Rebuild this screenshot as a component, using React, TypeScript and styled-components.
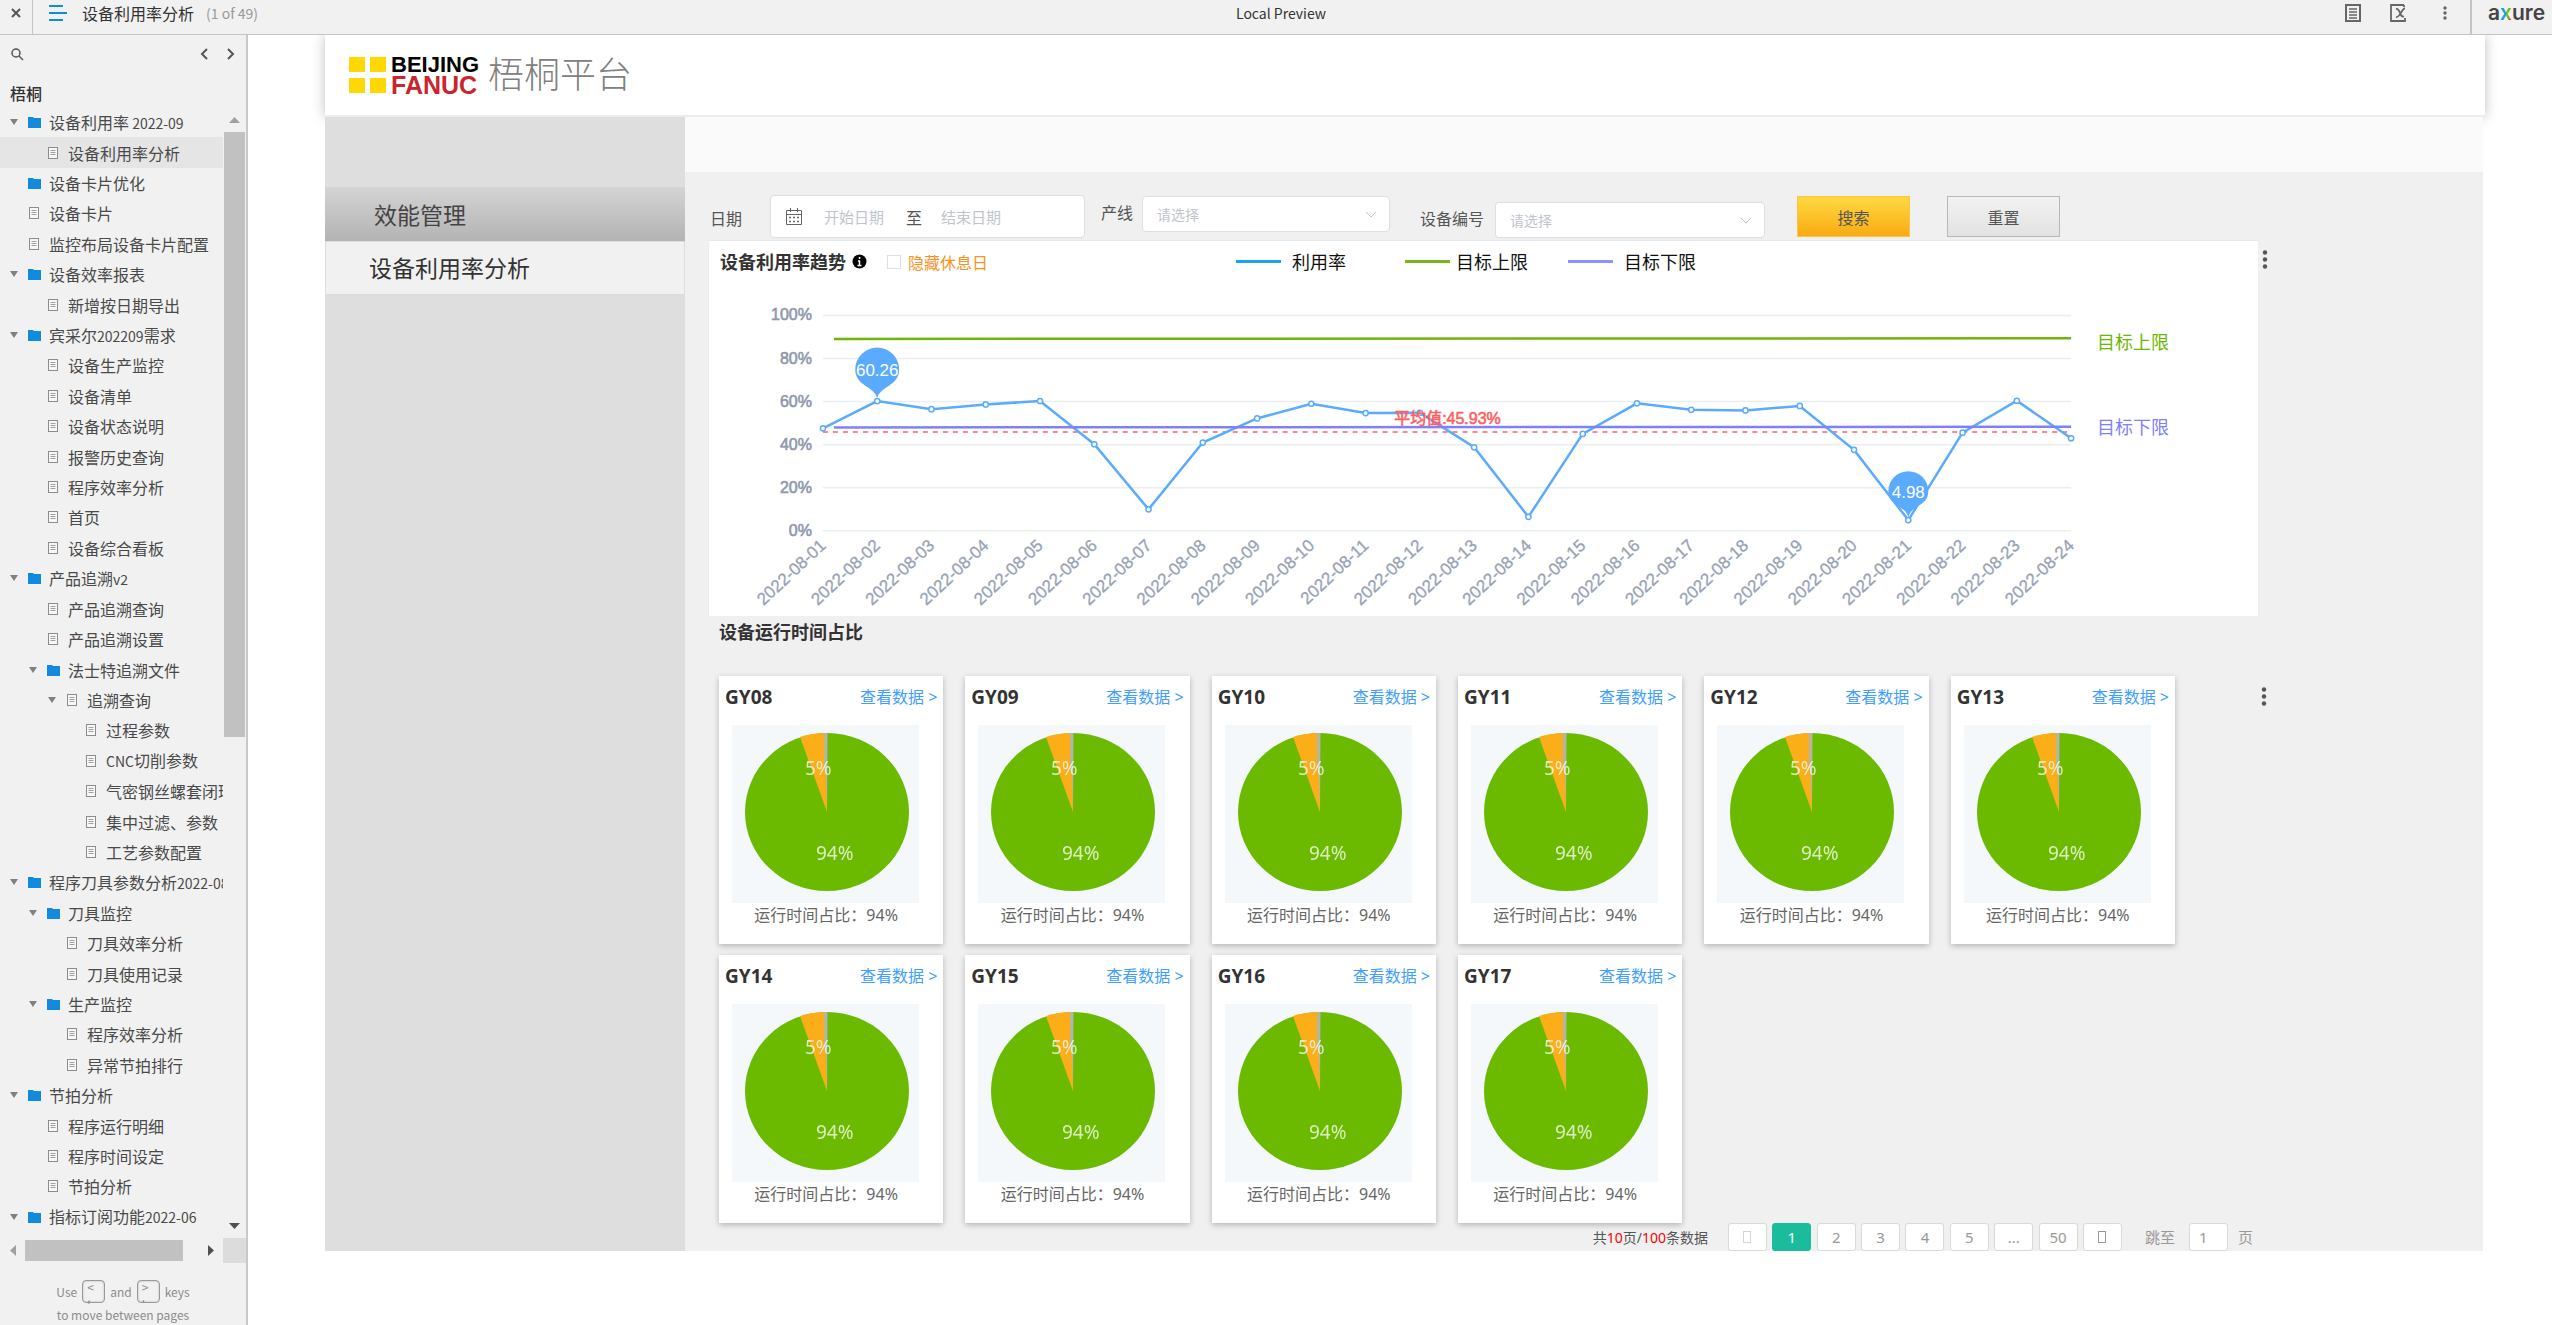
import React from "react";
import styled, { createGlobalStyle } from "styled-components";

const GlobalStyle = createGlobalStyle`
  *, *::before, *::after { box-sizing: border-box; }
  body { margin: 0; background: #fff; }
  button, input, select { font-family: inherit; }
  h1, h2, h3, p, ul { margin: 0; padding: 0; }
`;

const Page = styled.div`
  display: flex;
  flex-direction: column;
  height: 100vh;
  overflow: hidden;
  font-family: "Noto Sans", "Noto Sans CJK SC", sans-serif;
  font-size: 16px;
  color: #333;
`;

/* ---------- player bar ---------- */

const PlayerBar = styled.header`
  display: flex;
  flex: none;
  justify-content: space-between;
  height: 35px;
  background: #f1f1f1;
  border-bottom: 1px solid #c4c4c4;
  font-family: "Noto Sans CJK SC", sans-serif;
`;

const BarSide = styled.div<{ $end?: boolean }>`
  display: flex;
  flex: 1 1 0;
  align-items: flex-start;
  justify-content: ${(p) => (p.$end ? "flex-end" : "flex-start")};
`;

const IconButton = styled.button<{ $w: number; $h?: number }>`
  display: flex;
  align-items: center;
  justify-content: center;
  width: ${(p) => p.$w}px;
  height: ${(p) => p.$h ?? 26}px;
  padding: 0;
  border: 0;
  background: none;
  color: #666;
`;

const CloseBox = styled.div`
  width: 33px;
  height: 34px;
  border-right: 1px solid #c4c4c4;
`;

const BarTitle = styled.span<{ $small?: boolean }>`
  padding-left: ${(p) => (p.$small ? 10 : 0)}px;
  font-size: ${(p) => (p.$small ? 14 : 16)}px;
  line-height: 26px;
  color: #333;
`;

const BarCount = styled.span`
  margin-left: 12px;
  font-size: 14px;
  line-height: 26px;
  color: #999;
`;

const BarTools = styled.div`
  display: flex;
  gap: 18px;
  padding-right: 11px;
`;

const BarLogo = styled.div`
  display: flex;
  width: 82px;
  height: 34px;
  padding-left: 16px;
  border-left: 2px solid #c4c4c4;
  font-family: Inter, sans-serif;
  font-size: 21px;
  font-weight: 600;
  line-height: 25px;
  color: #444;
`;

const LogoX = styled.span`
  background: conic-gradient(at 50% 56%, #76b82a 0 90deg, #e5308a 90deg 180deg, #1b9fdb 180deg 360deg);
  background-clip: text;
  color: transparent;
`;

const Workspace = styled.div`
  display: flex;
  flex: 1;
  min-height: 0;
`;

/* ---------- page tree ---------- */

const Sidebar = styled.aside`
  display: flex;
  flex: none;
  flex-direction: column;
  width: 248px;
  background: #f1f1f1;
  border-right: 2px solid #c8c8c8;
  font-family: "Noto Sans CJK SC", sans-serif;
`;

const SearchRow = styled.div`
  display: flex;
  align-items: center;
  height: 38px;
  padding: 0 3px;
`;

const Spacer = styled.div`
  flex: 1;
`;

const ProjectName = styled.h2`
  height: 34px;
  padding: 3px 10px 0;
  font-size: 16px;
  font-weight: 500;
  line-height: 35px;
  color: #333;
`;

const TreeArea = styled.div`
  display: flex;
  flex: 1;
  min-height: 0;
`;

const TreeList = styled.ul`
  display: flex;
  flex: 1;
  flex-direction: column;
  min-width: 0;
  padding-bottom: 6px;
  overflow: hidden;
  list-style: none;
`;

const TreeRow = styled.li<{ $level: number; $active?: boolean }>`
  display: flex;
  flex: 1 1 0;
  align-items: center;
  min-height: 0;
  padding-left: ${(p) => 6 + p.$level * 19}px;
  background: ${(p) => (p.$active ? "#e5e5e5" : "transparent")};
  white-space: nowrap;
`;

const ArrowSlot = styled.span`
  display: flex;
  flex: none;
  justify-content: center;
  width: 16px;
`;

const IconSlot = styled.span`
  display: flex;
  flex: none;
  justify-content: center;
  width: 24px;
`;

const TreeLink = styled.a`
  padding-left: 3px;
  font-size: 16px;
  line-height: 24px;
  color: #4a4a4a;
  text-decoration: none;
`;

const Latin = styled.span`
  font-size: 14px;
`;

const VTrack = styled.div`
  display: flex;
  flex: none;
  flex-direction: column;
  align-items: center;
  justify-content: space-between;
  width: 23px;
`;

const ArrowBox = styled.div`
  display: flex;
  flex: none;
  align-items: center;
  justify-content: center;
  width: 25px;
  height: 25px;
`;

const VThumb = styled.div`
  flex: 0 1 605px;
  width: 21px;
  margin-bottom: auto;
  background: #c1c1c1;
`;

const HTrack = styled.div`
  display: flex;
  align-items: center;
  height: 25px;
`;

const HThumb = styled.div`
  width: 158px;
  height: 21px;
  margin-right: auto;
  background: #c1c1c1;
`;

const Corner = styled.div`
  width: 23px;
  height: 25px;
  background: #dcdcdc;
`;

const KeyHint = styled.div`
  height: 62px;
  padding-top: 16px;
  overflow: hidden;
  font-size: 12px;
  line-height: 22px;
  color: #8c8c8c;
  text-align: center;
`;

const KeyLine = styled.p`
  display: flex;
  align-items: center;
  justify-content: center;
  gap: 5px;
  height: 25px;
  line-height: 25px;
`;

const KeyCap = styled.kbd`
  display: flex;
  flex-direction: column;
  width: 23px;
  height: 23px;
  padding: 1px 4px;
  border: 1px solid #999;
  border-radius: 4px;
  font-family: inherit;
  font-size: 12px;
  line-height: 10px;
  text-align: left;
  box-shadow: inset 0 0 2px #aaa;
`;

/* ---------- prototype ---------- */

const Stage = styled.main`
  flex: 1;
  min-width: 0;
  padding: 0 67px 0 77px;
  overflow: hidden;
`;

const Masthead = styled.header`
  display: flex;
  align-items: center;
  height: 82px;
  padding: 0 24px 1px;
  background: #fff;
  border-bottom: 2px solid #ededed;
  box-shadow: 0 0 12px rgba(0, 0, 0, 0.25);
`;

const LogoSquares = styled.div`
  display: grid;
  grid-template-columns: 16px 16px;
  grid-template-rows: 15px 15px;
  gap: 6px 5px;
`;

const LogoSquare = styled.span`
  background: #ffd803;
`;

const LogoWords = styled.div`
  display: flex;
  flex-direction: column;
  width: 97px;
  padding-left: 5px;
  font-family: "Liberation Sans", sans-serif;
  font-weight: 700;
  line-height: 20px;
`;

const LogoWord = styled.span<{ $color: string; $size: number }>`
  font-size: ${(p) => p.$size}px;
  color: ${(p) => p.$color};
`;

const PlatformName = styled.h1`
  margin-left: 5px;
  font-size: 36px;
  font-weight: 300;
  line-height: 48px;
  color: #808080;
`;

const Body = styled.div`
  display: flex;
  margin-right: 2px;
`;

const SideMenu = styled.nav`
  flex: none;
  width: 360px;
  padding-top: 70px;
  background: #dedede;
`;

const MenuGroup = styled.h2`
  height: 54px;
  padding-left: 49px;
  background: linear-gradient(#d4d4d4, #b3b3b3);
  font-size: 23px;
  font-weight: 400;
  line-height: 56px;
  color: #444;
`;

const MenuItem = styled.a`
  display: block;
  height: 54px;
  padding-left: 43px;
  background: #f1f1f1;
  border: 1px solid #dcdcdc;
  font-size: 23px;
  line-height: 52px;
  color: #333;
  text-decoration: none;
`;

const Content = styled.div`
  flex: 1;
  min-width: 0;
  background: #f0f0f0;
`;

const TopStrip = styled.div`
  height: 55px;
  background: #fafafa;
`;

const Inner = styled.div`
  padding-left: 23px;
`;

const Filters = styled.form`
  display: flex;
  height: 66px;
  margin-bottom: 2px;
  padding: 23px 0 0 2px;
`;

const Field = styled.div<{ $end?: boolean; $gap: number; $before: number }>`
  display: flex;
  align-items: flex-end;
  align-self: ${(p) => (p.$end ? "flex-end" : "flex-start")};
  gap: ${(p) => p.$gap}px;
  margin-left: ${(p) => p.$before}px;
`;

const FieldLabel = styled.label`
  font-size: 16px;
  line-height: 37px;
  color: #555;
  white-space: nowrap;
`;

const DateBox = styled.div`
  display: flex;
  align-items: center;
  width: 315px;
  height: 43px;
  padding-left: 15px;
  background: #fff;
  border: 1px solid #dcdfe6;
  border-radius: 4px;
  color: #555;
`;

const DateInput = styled.input`
  width: 82px;
  margin-left: 22px;
  padding: 0;
  border: 0;
  background: none;
  font-size: 15px;
  line-height: 24px;
  &::placeholder { color: #c0c4cc; }
  & + span + & { margin-left: 19px; }
`;

const DateSeparator = styled.span`
  width: 16px;
`;

const SelectWrap = styled.div<{ $w: number }>`
  display: grid;
  align-items: center;
  width: ${(p) => p.$w}px;
  & > * { grid-area: 1 / 1; }
  & > svg { justify-self: end; margin-right: 13px; pointer-events: none; }
`;

const Select = styled.select`
  width: 100%;
  height: 36px;
  padding: 0 14px;
  appearance: none;
  background: #fff;
  border: 1px solid #dcdfe6;
  border-radius: 4px;
  font-size: 14px;
  color: #c0c4cc;
`;

const ActionButton = styled.button<{ $primary?: boolean; $before: number }>`
  width: 113px;
  height: 41px;
  margin: 1px 0 0 ${(p) => p.$before}px;
  padding: 0;
  background: ${(p) => (p.$primary ? "linear-gradient(#ffd940, #f9aa14)" : "linear-gradient(#f2f2f2, #e2e2e2)")};
  border: 1px solid ${(p) => (p.$primary ? "#fcc544" : "#b8b8b8")};
  font-size: 16px;
  color: #555;
`;

const ChartRow = styled.div`
  display: flex;
  align-items: flex-start;
`;

const ChartPanel = styled.section`
  flex: 0 1 1550px;
  min-width: 0;
  background: #fff;
  border-top: 1px solid #e4e8f0;
  border-left: 1px solid #e9ecf3;
`;

const ChartHead = styled.div`
  display: flex;
  align-items: center;
  height: 43px;
  padding: 0 0 2px 11px;
`;

const ChartTitleGroup = styled.div`
  display: flex;
  align-items: center;
  width: 516px;
`;

const SectionTitle = styled.h2`
  font-size: 18px;
  font-weight: 700;
  line-height: 32px;
  color: #333;
`;

const RunTitle = styled(SectionTitle)`
  padding-left: 11px;
`;

const InfoIcon = styled.svg`
  margin: 0 20px 0 6px;
`;

const HideRest = styled.label`
  display: flex;
  align-items: center;
  gap: 7px;
  font-size: 16px;
  color: #f7931e;
`;

const Check = styled.input`
  width: 14px;
  height: 14px;
  margin: 0;
  appearance: none;
  background: #fff;
  border: 1px solid #dcdfe6;
`;

const Legend = styled.div`
  display: grid;
  grid-template-columns: 169px 163px auto;
`;

const LegendItem = styled.span<{ $gap: number }>`
  display: flex;
  align-items: center;
  gap: ${(p) => p.$gap}px;
  font-size: 18px;
  line-height: 24px;
  color: #111;
`;

const LegendLine = styled.i<{ $color: string }>`
  width: 45px;
  height: 3px;
  background: ${(p) => p.$color};
`;

const Plot = styled.svg`
  display: block;
  width: 100%;
  height: auto;
`;

const CardRow = styled.div`
  display: flex;
  align-items: flex-start;
  padding: 28px 0 0 11px;
`;

const Cards = styled.div`
  display: grid;
  flex: 0 1 1456px;
  grid-template-columns: repeat(6, minmax(0, 1fr));
  gap: 11px 22px;
`;

const CardMenu = styled.div`
  padding: 5px 0 0 77px;
`;

const PanelMenu = styled.div`
  padding-top: 3px;
`;

const Card = styled.article`
  height: 268px;
  background: #fff;
  box-shadow: 0 2px 6px rgba(0, 0, 0, 0.25);
`;

const CardHead = styled.div`
  display: flex;
  align-items: center;
  justify-content: space-between;
  height: 49px;
  padding: 0 6px 7px;
`;

const CardName = styled.h3`
  font-size: 19px;
  font-weight: 700;
  line-height: 24px;
`;

const CardLink = styled.a`
  font-size: 16px;
  line-height: 24px;
  color: #409eff;
  text-decoration: none;
`;

const Pie = styled.svg`
  display: block;
  margin-left: 13px;
  background: #f4f8fb;
`;

const CardText = styled.p`
  padding-right: 10px;
  font-size: 16px;
  line-height: 24px;
  color: #666;
  text-align: center;
`;

const Pager = styled.nav`
  display: flex;
  align-items: center;
  justify-content: flex-end;
  height: 28px;
  padding-right: 230px;
  font-size: 15px;
  color: #999;
`;

const Total = styled.span`
  margin-right: 20px;
  font-size: 14px;
  color: #555;
`;

const Red = styled.span`
  color: #f00;
`;

const PageButtons = styled.div`
  display: flex;
  justify-content: space-between;
  width: 394px;
  margin-right: 23px;
`;

const PageButton = styled.button<{ $active?: boolean; $faded?: boolean }>`
  display: flex;
  align-items: center;
  justify-content: center;
  width: 39px;
  height: 28px;
  padding: 0;
  background: ${(p) => (p.$active ? "#1abc9c" : "#fff")};
  border: 1px solid ${(p) => (p.$active ? "#1abc9c" : "#d9d9d9")};
  border-radius: 3px;
  font-size: 15px;
  color: ${(p) => (p.$active ? "#fff" : p.$faded ? "#d5d5d5" : "#999")};
`;

const GlyphBox = styled.i`
  width: 8px;
  height: 12px;
  border: 1px solid currentColor;
`;

const JumpLabel = styled.label`
  display: flex;
  align-items: center;
  gap: 14px;
  margin-right: 10px;
`;

const JumpInput = styled.input`
  width: 39px;
  height: 28px;
  padding: 0 9px;
  background: #fff;
  border: 1px solid #d9d9d9;
  border-radius: 3px;
  font-size: 15px;
  color: #999;
`;

/* ---------- data ---------- */

type Kind = "folder" | "page";
type Node = [level: number, kind: Kind, open: boolean, name: string];

const tree: Node[] = [
  [0, "folder", true, "设备利用率 2022-09"],
  [1, "page", false, "设备利用率分析"],
  [0, "folder", false, "设备卡片优化"],
  [0, "page", false, "设备卡片"],
  [0, "page", false, "监控布局设备卡片配置"],
  [0, "folder", true, "设备效率报表"],
  [1, "page", false, "新增按日期导出"],
  [0, "folder", true, "宾采尔202209需求"],
  [1, "page", false, "设备生产监控"],
  [1, "page", false, "设备清单"],
  [1, "page", false, "设备状态说明"],
  [1, "page", false, "报警历史查询"],
  [1, "page", false, "程序效率分析"],
  [1, "page", false, "首页"],
  [1, "page", false, "设备综合看板"],
  [0, "folder", true, "产品追溯v2"],
  [1, "page", false, "产品追溯查询"],
  [1, "page", false, "产品追溯设置"],
  [1, "folder", true, "法士特追溯文件"],
  [2, "page", true, "追溯查询"],
  [3, "page", false, "过程参数"],
  [3, "page", false, "CNC切削参数"],
  [3, "page", false, "气密钢丝螺套闭环"],
  [3, "page", false, "集中过滤、参数"],
  [3, "page", false, "工艺参数配置"],
  [0, "folder", true, "程序刀具参数分析2022-08"],
  [1, "folder", true, "刀具监控"],
  [2, "page", false, "刀具效率分析"],
  [2, "page", false, "刀具使用记录"],
  [1, "folder", true, "生产监控"],
  [2, "page", false, "程序效率分析"],
  [2, "page", false, "异常节拍排行"],
  [0, "folder", true, "节拍分析"],
  [1, "page", false, "程序运行明细"],
  [1, "page", false, "程序时间设定"],
  [1, "page", false, "节拍分析"],
  [0, "folder", true, "指标订阅功能2022-06"],
];

const usage = [
  47.6, 60.26, 56.5, 58.7, 60.3, 40.2, 10, 41, 52.2, 59, 54.7, 54.8,
  38.8, 6.5, 45, 59.2, 56.2, 55.9, 58, 37.6, 4.98, 45.6, 60.4, 43,
];

const machines = ["GY08", "GY09", "GY10", "GY11", "GY12", "GY13", "GY14", "GY15", "GY16", "GY17"];

/* ---------- icons ---------- */

const Triangle = ({ dir, color = "#505050" }: { dir: "up" | "down" | "left" | "right"; color?: string }) => {
  const d = {
    up: "M0 6 5.500 0 11 6Z",
    down: "M0 0H11L5.500 6Z",
    left: "M6 0V11L0 5.500Z",
    right: "M0 0V11L6 5.500Z",
  }[dir];
  const flat = dir === "up" || dir === "down";
  return (
    <svg width={flat ? 11 : 6} height={flat ? 6 : 11} aria-hidden="true">
      <path d={d} fill={color} />
    </svg>
  );
};

const TreeArrow = () => (
  <svg width="8" height="6" aria-hidden="true">
    <path d="M0 0H8L4 6Z" fill="#808080" />
  </svg>
);

const FolderIcon = () => (
  <svg width="13" height="12" aria-hidden="true">
    <path d="M0 1h5l1 1h7v10H0z" fill="#148ade" />
  </svg>
);

const PageIcon = () => (
  <svg width="10" height="12" aria-hidden="true">
    <rect x=".5" y=".5" width="9" height="11" fill="#f7f7f7" stroke="#8c8c8c" />
    <path d="M2.500 3.500h5M2.500 5.500h5M2.500 7.500h5" stroke="#a0a0a0" />
  </svg>
);

const Chevron = ({ d }: { d: string }) => (
  <svg width="12" height="14" viewBox="0 0 12 14" fill="none" stroke="#555" strokeWidth="2" aria-hidden="true">
    <path d={d} />
  </svg>
);

const SelectArrow = () => (
  <svg width="12" height="7" fill="none" stroke="#c0c4cc" aria-hidden="true">
    <path d="M1 1 6 6 11 1" />
  </svg>
);

const Dots = () => (
  <svg width="6" height="19" fill="#555" aria-hidden="true">
    <circle cx="3" cy="2.500" r="2.200" />
    <circle cx="3" cy="9.500" r="2.200" />
    <circle cx="3" cy="16.500" r="2.200" />
  </svg>
);

/* Latin runs are set smaller than the Chinese characters beside them. */
const MixedName = ({ text }: { text: string }) => (
  <>
    {text.split(/([\x20-\x7e]+)/).map((run, i) => (i % 2 ? <Latin key={i}>{run}</Latin> : run))}
  </>
);

/* ---------- chart ---------- */

const LEFT = 114;
const RIGHT = 1363;
const px = (i: number) => LEFT + (i * (RIGHT - LEFT)) / (usage.length - 1);
const py = (v: number) => 247 - v * 2.155;

const Pin = ({ i, size }: { i: number; size: number }) => {
  const x = px(i);
  const tip = py(usage[i]) - 3;
  const cy = tip - size * 1.3;
  return (
    <g>
      <path
        d={`M${x} ${tip} C${x - 3} ${tip - 12} ${x - size} ${cy + size * 0.75} ${x - size} ${cy} A${size} ${size} 0 0 1 ${x + size} ${cy} C${x + size} ${cy + size * 0.75} ${x + 3} ${tip - 12} ${x} ${tip}Z`}
        fill="#5aaaff"
      />
      <text x={x} y={cy + 7} textAnchor="middle" fontSize="17" fill="#fff">
        {usage[i]}
      </text>
    </g>
  );
};

const TrendChart = () => (
  <Plot viewBox="0 0 1550 332" role="img" aria-label="设备利用率趋势" fontFamily='"Liberation Sans", "Noto Sans CJK SC", sans-serif'>
    {[0, 20, 40, 60, 80, 100].map((v) => (
      <g key={v}>
        <path d={`M${LEFT} ${py(v)}H${RIGHT}`} stroke="#e9eef1" strokeWidth="1.500" />
        <text x="103" y={py(v) + 5} textAnchor="end" fontSize="16" fill="#8f98ad" stroke="#8f98ad" strokeWidth=".6">
          {v}%
        </text>
      </g>
    ))}
    {usage.map((_, i) => (
      <text
        key={i}
        transform={`translate(${px(i) + 4} ${263}) rotate(-43)`}
        textAnchor="end"
        fontSize="17"
        fill="#98a2b6"
        stroke="#98a2b6"
        strokeWidth=".3"
      >
        {`2022-08-${String(i + 1).padStart(2, "0")}`}
      </text>
    ))}
    <path d={`M${LEFT} ${py(45.93)}H${RIGHT}`} stroke="#f56565" strokeWidth="1.500" strokeDasharray="5 5" />
    <polyline
      points={usage.map((v, i) => `${px(i)},${py(v)}`).join(" ")}
      fill="none"
      stroke="#5aaaff"
      strokeWidth="2.500"
    />
    {usage.map((v, i) => (
      <circle key={i} cx={px(i)} cy={py(v)} r="2.600" fill="#fff" stroke="#5aaaff" strokeWidth="1.500" />
    ))}
    <path d={`M125 ${py(89.1)}L${RIGHT} ${py(89.4)}`} stroke="#6eb60a" strokeWidth="2.500" />
    <path d={`M125 ${py(48)}L${RIGHT} ${py(48.3)}`} stroke="#8080ff" strokeWidth="2.500" />
    <Pin i={1} size={22} />
    <Pin i={20} size={20} />
    <text x="739" y="140" textAnchor="middle" fontSize="16" fill="#ff5f5f" stroke="#ff5f5f" strokeWidth=".6">
      平均值:45.93%
    </text>
    <text x="1389" y="65" fontSize="18" fill="#6cb800">目标上限</text>
    <text x="1389" y="150" fontSize="18" fill="#8080ff">目标下限</text>
  </Plot>
);

const MachineCard = ({ name }: { name: string }) => (
  <Card>
    <CardHead>
      <CardName>{name}</CardName>
      <CardLink href="#data">查看数据 &gt;</CardLink>
    </CardHead>
    <Pie width="187" height="178" role="img" aria-label={`${name} 94%`} fontSize="19" fill="#fff">
      <ellipse cx="95" cy="87" rx="82" ry="79" fill="#6cba00" />
      <path d="M95 87 68 12Q80 8 95 8Z" fill="#fbae17" />
      <path d="M95 87 92 8H95.500Z" fill="#b5b5a5" />
      <path d="M93.500 8V45" stroke="#b5b5a5" strokeWidth="3" />
      <text x="73" y="50" opacity=".75">5%</text>
      <text x="84" y="135" opacity=".75">94%</text>
    </Pie>
    <CardText>运行时间占比：94%</CardText>
  </Card>
);

const LinePicker = ({ id, width }: { id: string; width: number }) => (
  <SelectWrap $w={width}>
    <Select id={id} defaultValue="">
      <option value="">请选择</option>
    </Select>
    <SelectArrow />
  </SelectWrap>
);

export default function App() {
  return (
    <Page>
      <GlobalStyle />
      <PlayerBar>
        <BarSide>
          <CloseBox>
            <IconButton $w={32} aria-label="Close">
              <svg width="10" height="10" stroke="#555" strokeWidth="2" aria-hidden="true">
                <path d="M1 1 9 9M9 1 1 9" />
              </svg>
            </IconButton>
          </CloseBox>
          <IconButton $w={49} aria-label="Pages">
            <svg width="18" height="16" stroke="#0a8fd4" strokeWidth="2" aria-hidden="true">
              <path d="M0 1H14M0 8H18M0 15H14" />
            </svg>
          </IconButton>
          <BarTitle>设备利用率分析</BarTitle>
          <BarCount>(1 of 49)</BarCount>
        </BarSide>
        <BarTitle $small>Local Preview</BarTitle>
        <BarSide $end>
          <BarTools>
            <IconButton $w={28} aria-label="Notes">
              <svg width="16" height="18" fill="none" stroke="#666" strokeWidth="2" aria-hidden="true">
                <path d="M1 1H15V17H1Z" />
                <path d="M4 5H12M4 8H12M4 11H12M4 14H12" strokeWidth="1.500" />
              </svg>
            </IconButton>
            <IconButton $w={28} aria-label="Variables">
              <svg width="18" height="18" fill="none" stroke="#666" strokeWidth="1.800" aria-hidden="true">
                <path d="M14 1H1V17H15V14M6 5C11 4 9 14 14 12.500M15 4.500C12 4 10 14 6 13M14 1V3" />
              </svg>
            </IconButton>
            <IconButton $w={28} aria-label="More">
              <svg width="4" height="14" fill="#666" aria-hidden="true">
                <circle cx="2" cy="2" r="1.700" />
                <circle cx="2" cy="7" r="1.700" />
                <circle cx="2" cy="12" r="1.700" />
              </svg>
            </IconButton>
          </BarTools>
          <BarLogo>
            a<LogoX>x</LogoX>ure
          </BarLogo>
        </BarSide>
      </PlayerBar>

      <Workspace>
        <Sidebar>
          <SearchRow>
            <IconButton $w={28} aria-label="Search">
              <svg width="13" height="13" fill="none" stroke="#555" strokeWidth="1.500" aria-hidden="true">
                <circle cx="5" cy="5" r="4" />
                <path d="M8 8 12 12" />
              </svg>
            </IconButton>
            <Spacer />
            <IconButton $w={26} aria-label="Previous page"><Chevron d="M9 2 4 7 9 12" /></IconButton>
            <IconButton $w={26} aria-label="Next page"><Chevron d="M4 2 9 7 4 12" /></IconButton>
          </SearchRow>
          <ProjectName>梧桐</ProjectName>
          <TreeArea>
            <TreeList>
              {tree.map(([level, kind, open, name], i) => (
                <TreeRow key={i} $level={level} $active={i === 1}>
                  <ArrowSlot>{open && <TreeArrow />}</ArrowSlot>
                  <IconSlot>{kind === "folder" ? <FolderIcon /> : <PageIcon />}</IconSlot>
                  <TreeLink href="#page"><MixedName text={name} /></TreeLink>
                </TreeRow>
              ))}
            </TreeList>
            <VTrack aria-hidden="true">
              <ArrowBox><Triangle dir="up" color="#a0a0a0" /></ArrowBox>
              <VThumb />
              <ArrowBox><Triangle dir="down" /></ArrowBox>
            </VTrack>
          </TreeArea>
          <HTrack aria-hidden="true">
            <ArrowBox><Triangle dir="left" color="#a0a0a0" /></ArrowBox>
            <HThumb />
            <ArrowBox><Triangle dir="right" /></ArrowBox>
            <Corner />
          </HTrack>
          <KeyHint>
            <KeyLine>
              Use <KeyCap><span>&lt;</span><span>,</span></KeyCap> and <KeyCap><span>&gt;</span><span>.</span></KeyCap> keys
            </KeyLine>
            <p>to move between pages</p>
          </KeyHint>
        </Sidebar>

        <Stage>
          <Masthead>
            <LogoSquares>
              <LogoSquare /><LogoSquare /><LogoSquare /><LogoSquare />
            </LogoSquares>
            <LogoWords>
              <LogoWord $color="#000" $size={22}>BEIJING</LogoWord>
              <LogoWord $color="#c9252d" $size={25}>FANUC</LogoWord>
            </LogoWords>
            <PlatformName>梧桐平台</PlatformName>
          </Masthead>
          <Body>
            <SideMenu>
              <MenuGroup>效能管理</MenuGroup>
              <MenuItem href="#usage">设备利用率分析</MenuItem>
            </SideMenu>
            <Content>
              <TopStrip />
              <Inner>
                <Filters>
                  <Field $gap={28} $before={0}>
                    <FieldLabel htmlFor="start">日期</FieldLabel>
                    <DateBox>
                      <svg width="16" height="17" fill="none" stroke="#666" aria-hidden="true">
                        <path d="M.5 2.500h15v14H.5zM.5 6.500h15M4.500 0v4M11.500 0v4" />
                        <path d="M3 9.500h10M3 13.500h10" strokeWidth="1.500" strokeDasharray="2 2" />
                      </svg>
                      <DateInput id="start" placeholder="开始日期" />
                      <DateSeparator>至</DateSeparator>
                      <DateInput aria-label="结束日期" placeholder="结束日期" />
                    </DateBox>
                  </Field>
                  <Field $gap={9} $before={16}>
                    <FieldLabel htmlFor="line">产线</FieldLabel>
                    <LinePicker id="line" width={248} />
                  </Field>
                  <Field $end $gap={11} $before={30}>
                    <FieldLabel htmlFor="machine">设备编号</FieldLabel>
                    <LinePicker id="machine" width={270} />
                  </Field>
                  <ActionButton type="button" $primary $before={32}>搜索</ActionButton>
                  <ActionButton type="button" $before={37}>重置</ActionButton>
                </Filters>

                <ChartRow>
                  <ChartPanel>
                    <ChartHead>
                      <ChartTitleGroup>
                        <SectionTitle>设备利用率趋势</SectionTitle>
                        <InfoIcon width="15" height="15" aria-hidden="true">
                          <circle cx="7.500" cy="7.500" r="7" fill="#000" />
                          <path d="M7.500 3v2M7.500 6.500V12M5.500 11.500h4M6 7h2" stroke="#fff" strokeWidth="1.500" />
                        </InfoIcon>
                        <HideRest>
                          <Check type="checkbox" />
                          隐藏休息日
                        </HideRest>
                      </ChartTitleGroup>
                      <Legend>
                        <LegendItem $gap={11}><LegendLine $color="#1aa3f5" />利用率</LegendItem>
                        <LegendItem $gap={6}><LegendLine $color="#76b81a" />目标上限</LegendItem>
                        <LegendItem $gap={11}><LegendLine $color="#8f8fff" />目标下限</LegendItem>
                      </Legend>
                    </ChartHead>
                    <TrendChart />
                  </ChartPanel>
                  <PanelMenu>
                    <IconButton $w={14} $h={32} aria-label="图表菜单"><Dots /></IconButton>
                  </PanelMenu>
                </ChartRow>

                <RunTitle>设备运行时间占比</RunTitle>
                <CardRow>
                  <Cards>
                    {machines.map((m) => <MachineCard key={m} name={m} />)}
                  </Cards>
                  <CardMenu>
                    <IconButton $w={24} $h={32} aria-label="卡片菜单"><Dots /></IconButton>
                  </CardMenu>
                </CardRow>
              </Inner>
              <Pager aria-label="分页">
                <Total>共<Red>10</Red>页/<Red>100</Red>条数据</Total>
                <PageButtons>
                  <PageButton $faded aria-label="上一页"><GlyphBox /></PageButton>
                  <PageButton $active>1</PageButton>
                  <PageButton>2</PageButton>
                  <PageButton>3</PageButton>
                  <PageButton>4</PageButton>
                  <PageButton>5</PageButton>
                  <PageButton>...</PageButton>
                  <PageButton>50</PageButton>
                  <PageButton aria-label="下一页"><GlyphBox /></PageButton>
                </PageButtons>
                <JumpLabel>
                  跳至
                  <JumpInput defaultValue="1" />
                </JumpLabel>
                <span>页</span>
              </Pager>
            </Content>
          </Body>
        </Stage>
      </Workspace>
    </Page>
  );
}
